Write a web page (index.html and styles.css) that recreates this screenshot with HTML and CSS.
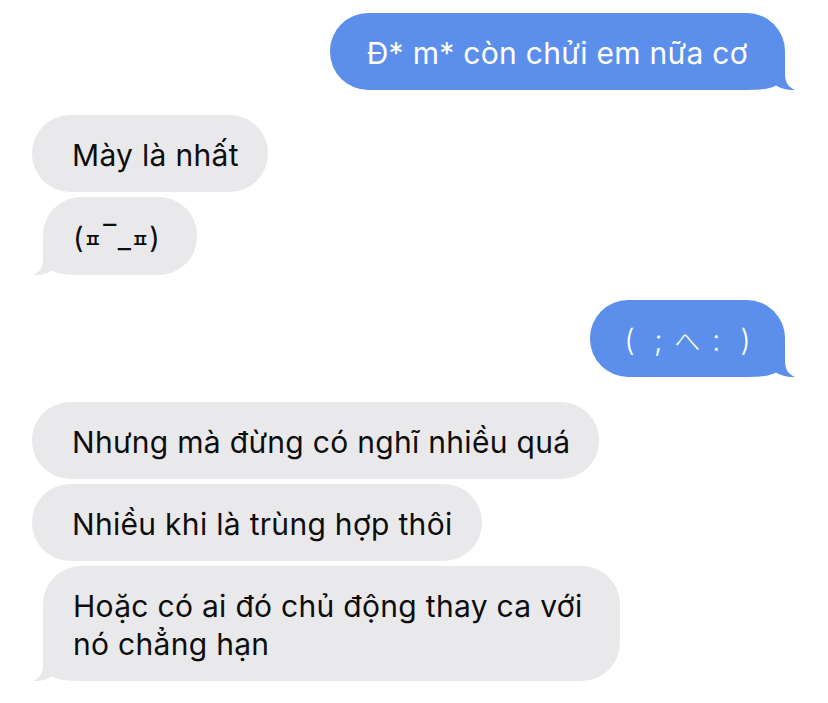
FILE: index.html
```html
<!DOCTYPE html>
<html lang="vi">
<head>
<meta charset="utf-8">
<title>Tin nhắn</title>
<link rel="stylesheet" href="styles.css">
</head>
<body>
<main class="chat">
  <div class="row out">
    <div class="bubble blue tailed"><span class="txt">Đ* m* còn chửi em nữa cơ</span><svg class="tail tail-right" viewBox="0 0 50 40" aria-hidden="true"><path d="M0 0 L40 0 L40 24 C40 32 43 37 50 40 C43 40.5 36 38.5 31 35.5 C26 38.5 18 40 0 40 Z"/></svg></div>
  </div>

  <div class="row in group-start">
    <div class="bubble grey"><span class="txt">Mày là nhất</span></div>
  </div>
  <div class="row in">
    <div class="bubble grey tailed"><span class="txt kr">(<span class="jamo">ㅍ</span>‾_<span class="jamo">ㅍ</span>)</span><svg class="tail tail-left" viewBox="0 0 50 40" aria-hidden="true"><path d="M0 0 L40 0 L40 24 C40 32 43 37 50 40 C43 40.5 36 38.5 31 35.5 C26 38.5 18 40 0 40 Z"/></svg></div>
  </div>

  <div class="row out group-start">
    <div class="bubble blue tailed kao"><span class="txt"><span class="k">(</span><span class="k">;</span><span class="k he">へ</span><span class="k">:</span><span class="k">)</span></span><svg class="tail tail-right" viewBox="0 0 50 40" aria-hidden="true"><path d="M0 0 L40 0 L40 24 C40 32 43 37 50 40 C43 40.5 36 38.5 31 35.5 C26 38.5 18 40 0 40 Z"/></svg></div>
  </div>

  <div class="row in group-start">
    <div class="bubble grey"><span class="txt">Nhưng mà đừng có nghĩ nhiều quá</span></div>
  </div>
  <div class="row in">
    <div class="bubble grey"><span class="txt">Nhiều khi là trùng hợp thôi</span></div>
  </div>
  <div class="row in">
    <div class="bubble grey tailed"><span class="txt">Hoặc có ai đó chủ động thay ca với<br>nó chẳng hạn</span><svg class="tail tail-left" viewBox="0 0 50 40" aria-hidden="true"><path d="M0 0 L40 0 L40 24 C40 32 43 37 50 40 C43 40.5 36 38.5 31 35.5 C26 38.5 18 40 0 40 Z"/></svg></div>
  </div>
</main>
</body>
</html>
```

FILE: styles.css
```css
html, body {
  margin: 0;
  padding: 0;
  background: #ffffff;
}

.chat {
  display: flex;
  flex-direction: column;
  gap: 5px;
  padding: 13px 0 0 0;
  font-family: Inter, "Noto Sans", "Noto Sans CJK KR", sans-serif;
  font-size: 30px;
  line-height: 38px;
  letter-spacing: 0.3px;
  color: #0d0d0d;
}

.row {
  display: flex;
}

.row.group-start {
  margin-top: 20px;
}

.row.out {
  justify-content: flex-end;
  padding-right: 43px;
}

.row.in {
  justify-content: flex-start;
  padding-left: 32px;
}

.bubble {
  position: relative;
  border-radius: 38px;
  padding: 21px 29px 18px 40px;
  white-space: nowrap;
}

.txt {
  position: relative;
  z-index: 1;
}

.bubble.grey {
  background: #e9e9eb;
}

.bubble.grey.tailed {
  margin-left: 11px;
  padding-left: 30px;
  padding-right: 37px;
}

.bubble.blue {
  background: #5b8feb;
  color: #ffffff;
  padding-left: 37px;
  padding-right: 37px;
}

.kr {
  font-size: 29px;
  letter-spacing: 0;
}

.jamo {
  font-family: "Noto Sans CJK KR", sans-serif;
  font-size: 20px;
  font-weight: 500;
  line-height: 1;
}

.bubble.kao {
  padding-left: 25px;
  padding-right: 25px;
}

.k {
  display: inline-block;
  width: 29px;
  text-align: center;
  font-weight: 300;
}

.k.he {
  font-family: "Noto Sans CJK JP", sans-serif;
  font-size: 26px;
  font-weight: 300;
}

.tail {
  position: absolute;
  bottom: 0;
  width: 50px;
  height: 40px;
}

.blue .tail path {
  fill: #5b8feb;
}

.grey .tail path {
  fill: #e9e9eb;
}

.tail-right {
  right: -10px;
}

.tail-left {
  left: -10px;
  transform: scaleX(-1);
}
```
